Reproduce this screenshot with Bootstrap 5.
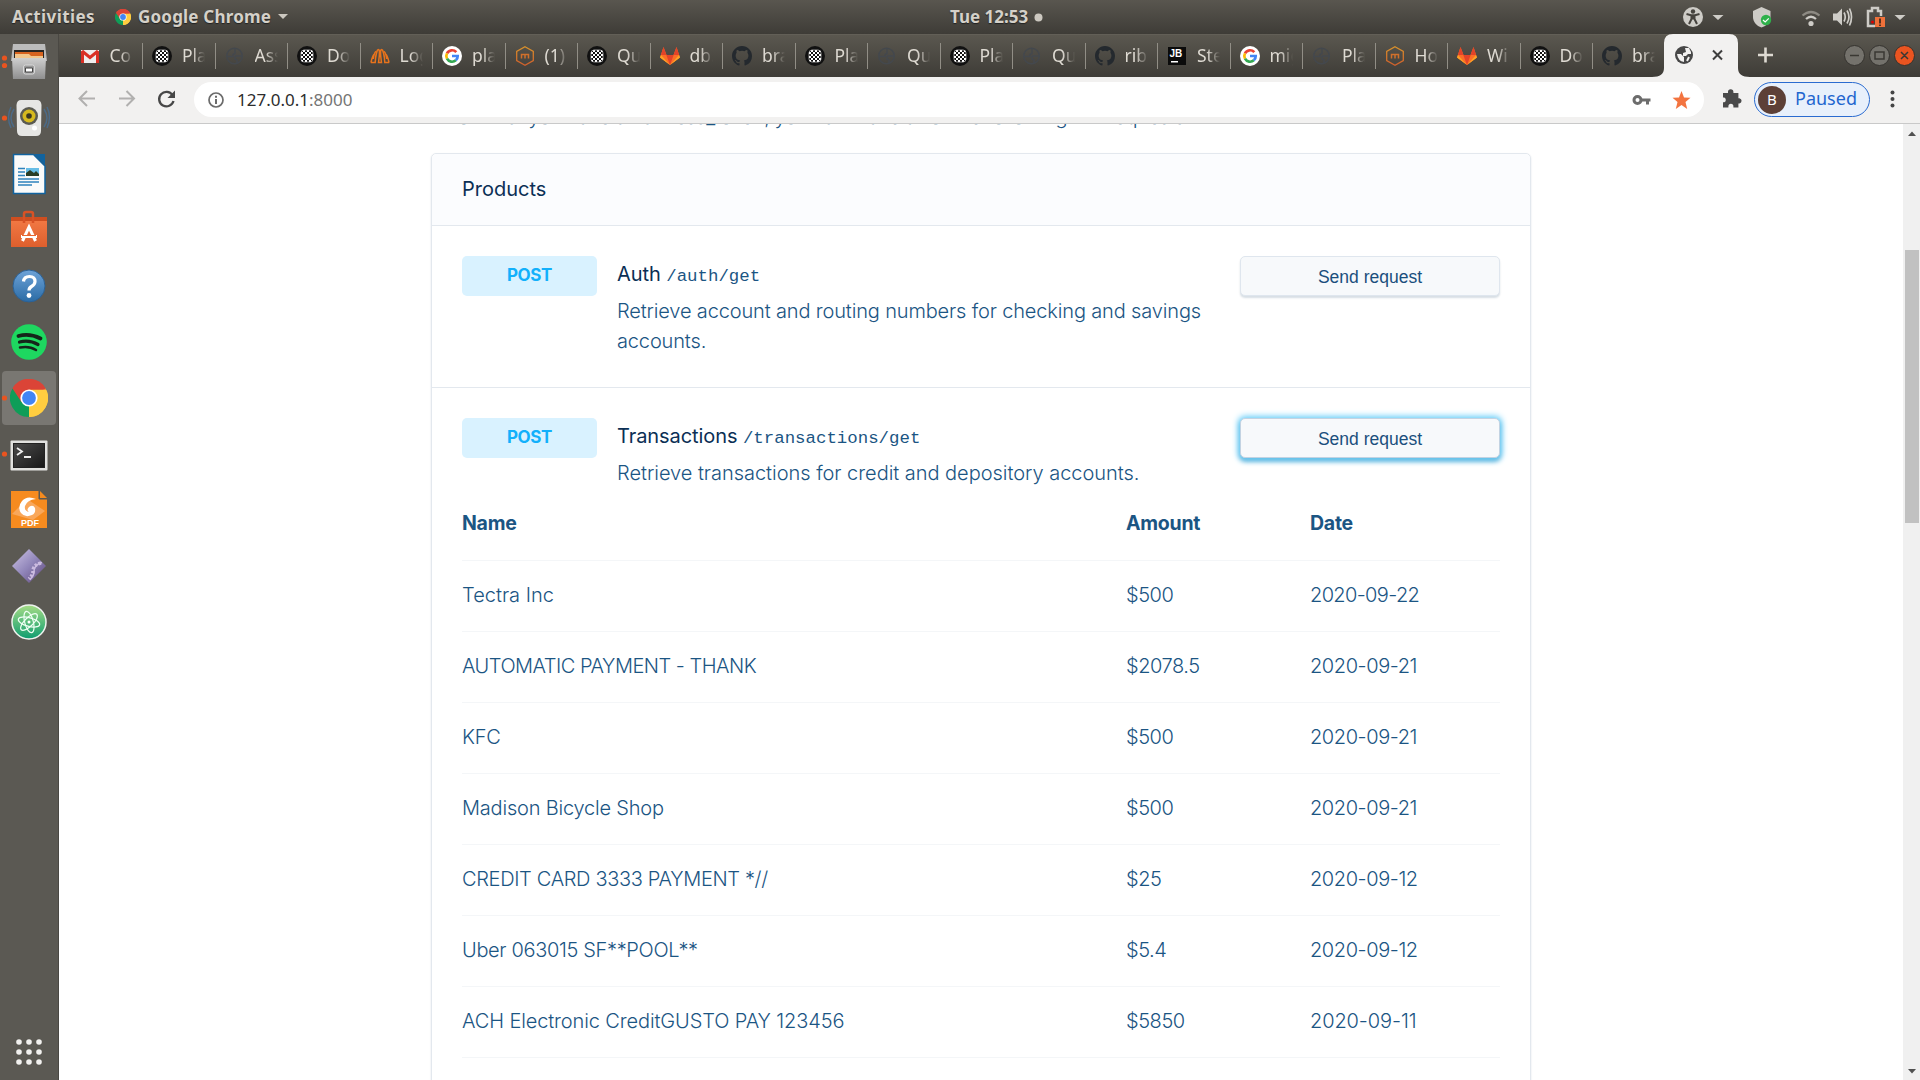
<!DOCTYPE html>
<html lang="en">
<head>
<meta charset="utf-8">
<title>Quickstart</title>
<link href="https://cdn.jsdelivr.net/npm/bootstrap@5.3.0/dist/css/bootstrap.min.css" rel="stylesheet">
<style>
html,body{width:1920px;height:1080px;overflow:hidden}
body{font-family:Inter,"Liberation Sans",sans-serif;background:#fff;color:#1b5583}
svg{display:block;flex:none}
.ui{font-family:"Noto Sans","Open Sans",sans-serif}
.panel{height:34px;background:linear-gradient(#59564f,#3e3c37);color:#d5d1c9;font-size:17px;font-weight:700;line-height:34px;text-shadow:0 1px 1px #222}
.panel-left{width:950px;padding-left:12px}
.panel-activities{width:103px;letter-spacing:.4px}
.panel-app{width:140px;margin-left:7px;letter-spacing:.2px}
.panel-clock{width:84px;letter-spacing:0}
.dock{width:59px;background:#5b5953;border-right:1px solid #4a4843}
.dock-item{width:58px;height:56px}
.strip{height:43px;background:linear-gradient(#5b5850,#3e3c37);box-shadow:inset 0 1px #625f57;padding-left:11.5px}
.tab-item{width:72.5px;height:43px;padding-left:9px}
.tab-item svg{width:20px;height:20px}
.tab-label{width:23px;margin-left:10px;margin-top:-2px;overflow:hidden;white-space:nowrap;color:#dedad2;font-size:17.5px;line-height:26px;-webkit-mask-image:linear-gradient(90deg,#000 45%,transparent);mask-image:linear-gradient(90deg,#000 45%,transparent)}
.tab-rule{width:1px;height:26px;margin-left:auto;background:#918e86}
.tab-active{margin-left:-14px}
.tools{height:47px;background:#f2f1f0;border-bottom:1px solid #c9c9c9;padding:0 0 1px 17px}
.omni{width:1510px;height:35px;border-radius:18px;background:#fff;font-size:17px;padding:0 4px 0 14px}
.omni-url{margin-left:13px;color:#2d2d2d}
.omni-port{color:#757575}
.pill{width:116px;height:35px;border:1px solid #2a6bd0;border-radius:18px;background:#e8f0fb;color:#1f66cf;font-size:18px;padding-left:3px}
.pill-text{margin:-2px 0 0 9px}
.avatar{width:28px;height:28px;border-radius:50%;background:#5d4037;color:#fff;font-size:15px}
.bar-track{width:17px;background:#f0f0f0;padding-top:126px}
.bar-thumb{width:14px;height:273px;background:#c1c1c1;margin-left:2px}
.page-col{width:1100px;margin-left:372px;font-size:20px;font-weight:300;line-height:30px}
.intro{display:flow-root;height:29px;padding-left:12px;white-space:nowrap;letter-spacing:-.37px}
.intro span{display:block;margin-top:-22px}
.panel-card{height:1000px;border:1px solid #e3e8ee;border-radius:5px;box-shadow:0 1px 2px rgba(3,49,86,.14)}
.card-title-bar{height:72px;background:#fbfcfe;border-bottom:1px solid #e3e8ee;border-radius:5px 5px 0 0;padding:20px 30px;color:#0b2f55;font-weight:400}
.endpoint{padding:30px 30px 0}
.endpoint-first{height:162px;border-bottom:1px solid #e3e8ee}
.endpoint-head{height:69px}
.verb{width:135px;height:40px;border-radius:5px;background:#d9f2ff;color:#12b0fb;font-weight:700;font-size:17px;letter-spacing:-.4px;line-height:38px}
.about{width:603px;margin-left:20px;letter-spacing:-.03px}
.about-tight{letter-spacing:-.15px}
.about-title{height:40px;line-height:36px;color:#0b2f55;font-weight:400;letter-spacing:-.08px}
.about-title code{font-family:"Liberation Mono",monospace;font-size:17.4px;color:#1b5583;font-weight:400;letter-spacing:0}
.send,.send:hover{width:260px;height:40px;border:1px solid #dfe6ee;border-radius:5px;background:#f7f9fb;color:#1b4f7d;font:17.5px/38px "Liberation Sans",sans-serif;padding:1px 0;box-shadow:0 2px 2px rgba(3,49,86,.16)}
.send.glow{border-color:#c3d3e2;box-shadow:0 0 6px 2px #6bd0fa,0 3px 5px #4a9bc4}
.tx{width:1038px;margin:0;--bs-table-bg:transparent;--bs-table-color:#1b5583;table-layout:fixed;letter-spacing:-.2px}
.tx th,.tx td{height:71px;padding:0 0 1px;border-bottom:1px solid #f4f6f8;vertical-align:middle}
.tx th{height:73px;font-weight:700;font-size:19.5px;letter-spacing:-.25px}
.tx td:nth-child(2){letter-spacing:-.45px}
.tx td:nth-child(3){letter-spacing:-.42px}
.tx tr:first-child td:nth-child(3){letter-spacing:-.64px}
.tx tr:last-child td:nth-child(3){letter-spacing:-.1px}
.tx .airy{letter-spacing:0}
.tx .caps{letter-spacing:-.5px}
.tx .caps-mix{letter-spacing:-.34px}
.tx .loose{letter-spacing:-.12px}
</style>
<script src="https://cdn.jsdelivr.net/npm/bootstrap@5.3.0/dist/js/bootstrap.bundle.min.js"></script>
</head>
<body>
<svg width="0" height="0" class="position-absolute">
<defs>
<linearGradient id="hexg" x2="0" y2="1"><stop stop-color="#d9922b"/><stop offset="1" stop-color="#cf5f2b"/></linearGradient>
<linearGradient id="metal" x2="0" y2="1"><stop stop-color="#cfcfcf"/><stop offset="1" stop-color="#8f8f8f"/></linearGradient>
<linearGradient id="bagg" x2="0" y2="1"><stop stop-color="#f47b46"/><stop offset="1" stop-color="#dd5f2d"/></linearGradient>
<linearGradient id="helpg" x2="0" y2="1"><stop stop-color="#6ea3d8"/><stop offset="1" stop-color="#2a6ba5"/></linearGradient>
<linearGradient id="termg" x2="1" y2="1"><stop stop-color="#4b4b4b"/><stop offset="1" stop-color="#171717"/></linearGradient>
<linearGradient id="purp" x2="1" y2="1"><stop stop-color="#cfc6e6"/><stop offset=".5" stop-color="#9186ba"/><stop offset="1" stop-color="#5c4478"/></linearGradient>
<linearGradient id="atomg" x2="0" y2="1"><stop stop-color="#a5dc86"/><stop offset="1" stop-color="#0f9d70"/></linearGradient>
<pattern id="chk" width="4" height="4" patternUnits="userSpaceOnUse"><rect width="4" height="4" fill="#fff"/><path d="M0 0h2v2H0zM2 2h2v2H2z" fill="#111"/></pattern>
<symbol id="plaid" viewBox="0 0 20 20"><circle cx="10" cy="10" r="10" fill="#111"/><rect x="4" y="4" width="12" height="12" rx="3" fill="url(#chk)" stroke="#eee" stroke-width=".6"/></symbol>
<symbol id="dim" viewBox="0 0 20 20"><g fill="none" stroke="#44484d" stroke-width="1.5"><circle cx="9.500" cy="10" r="7.800"/><path d="M10 2.500v5l-2 1v2H2M10 10h7M10 10v3l2 1v3"/></g></symbol>
<symbol id="gmail" viewBox="0 0 20 20"><path d="M1 4h18v13H1z" fill="#eee"/><path d="M1 17V5l3 1v11zM19 17V5l-3 1v11z" fill="#d93025"/><path d="M2 5l8 6.500L18 5" fill="none" stroke="#d93025" stroke-width="3"/></symbol>
<symbol id="logs" viewBox="0 0 20 20"><g fill="none" stroke="#e8731c" stroke-width="1.500"><path d="M.8 16.500h4.400C5.500 10 7 3.500 8.500 3.500S9.500 9 8.500 16.500h3C10.500 9 10 3.500 11.500 3.500S14.500 10 14.800 16.500h4.400"/><path d="M1 16.500C2 12 3 8.500 4 8.500M19 16.500C18 12 17 8.500 16 8.500M3.300 13C4 8 4.800 5.500 6.300 5.500M16.700 13C16 8 15.200 5.500 13.700 5.500"/></g></symbol>
<symbol id="goog" viewBox="0 0 20 20"><circle cx="10" cy="10" r="10" fill="#fff"/><g fill="none" stroke-width="2.700"><path d="M14.300 6.200A5.700 5.700 0 0 0 5 7.300" stroke="#ea4335"/><path d="M5 7.300a5.700 5.700 0 0 0 0 5.400" stroke="#fbbc05"/><path d="M5 12.700a5.700 5.700 0 0 0 8.800 1.600" stroke="#34a853"/><path d="M13.800 14.300A5.500 5.500 0 0 0 15.700 10H10" stroke="#4285f4"/></g></symbol>
<symbol id="hexm" viewBox="0 0 20 20"><path d="M10 .8l8.300 4.600v9.200L10 19.200l-8.300-4.600V5.400z" fill="none" stroke="url(#hexg)" stroke-width="1.300"/><path d="M6.500 12.500V8.500h7v4M10 8.500v4" fill="none" stroke="#d0702b" stroke-width="1.500"/></symbol>
<symbol id="lab" viewBox="0 0 20 20"><path d="M10 19L0 11.500 3.500 1l3 8h7l3-8L20 11.500z" fill="#fc6d26"/><path d="M10 19L6.300 9h7.400z" fill="#e24329"/><path d="M3.500 1l3 8H1zM16.500 1l-3 8H19z" fill="#e24329"/><path d="M10 19L0 11.500 1 9zM10 19l10-7.500L19 9z" fill="#fca326"/></symbol>
<symbol id="hub" viewBox="0 0 16 16"><path fill="#24292e" d="M8 0C3.580 0 0 3.580 0 8c0 3.540 2.290 6.530 5.470 7.590.4.070.55-.17.55-.38 0-.19-.01-.82-.01-1.490-2.010.37-2.530-.49-2.690-.94-.09-.23-.48-.94-.82-1.130-.28-.15-.68-.52-.01-.53.63-.01 1.080.58 1.230.82.72 1.210 1.870.87 2.330.66.07-.52.28-.87.51-1.070-1.780-.2-3.640-.89-3.640-3.950 0-.87.31-1.590.82-2.150-.08-.2-.36-1.020.08-2.120 0 0 .67-.21 2.200.82a7.600 7.600 0 0 1 4 0c1.530-1.040 2.200-.82 2.200-.82.44 1.100.16 1.920.08 2.120.51.56.82 1.270.82 2.150 0 3.070-1.870 3.750-3.650 3.950.29.25.54.73.54 1.480 0 1.070-.01 1.930-.01 2.200 0 .21.15.46.55.38A8 8 0 0 0 16 8c0-4.420-3.580-8-8-8z"/></symbol>
<symbol id="jb" viewBox="0 0 20 20"><path d="M1 1h18v18H1z" fill="#0b0b0b"/><text x="2.500" y="10.500" font-family="Liberation Sans" font-weight="700" font-size="10" fill="#fff">JB</text><path d="M4 15h7v1.500H4z" fill="#fff"/></symbol>
<symbol id="chrome" viewBox="0 0 38 38"><path d="M19 19L2.500 9.500A19 19 0 0 1 35.500 9.500z" fill="#db4437"/><path d="M19 19L35.500 9.500A19 19 0 0 1 19 38z" fill="#ffcd40"/><path d="M19 19L19 38A19 19 0 0 1 2.500 9.500z" fill="#0f9d58"/><path d="M19 10.500h16.900A19 19 0 0 1 19 38l7.400-14.800z" fill="#ffcd40"/><path d="M19 10.500h17A19 19 0 0 0 2.500 9.500L11.600 23.200z" fill="#db4437"/><circle cx="19" cy="19" r="8.600" fill="#fff"/><circle cx="19" cy="19" r="6.900" fill="#4285f4"/></symbol>
</defs>
</svg>

<div class="d-flex flex-column vh-100">
<header class="panel ui d-flex">
  <div class="panel-left d-flex align-items-center">
    <span class="panel-activities">Activities</span>
    <svg width="16" height="16"><use href="#chrome"/></svg>
    <span class="panel-app">Google Chrome</span>
    <svg width="10" height="6"><path d="M0 0h10L5 5z" fill="#ccc8c0"/></svg>
  </div>
  <div class="d-flex align-items-center flex-grow-1">
    <span class="panel-clock">Tue 12:53</span>
    <svg width="9" height="9"><circle cx="4.500" cy="4.500" r="4" fill="#ccc8c0"/></svg>
    <svg class="ms-auto" width="237" height="34" viewBox="1683 0 237 34">
      <g fill="#ceccc7"><circle cx="1693" cy="17" r="10"/><path d="M1712.500 15h11l-5.500 5zM1894.500 15h11l-5.500 5z"/>
      <path d="M1761.500 7l9 4v6c0 5-4 9-9 10.500-5-1.500-8.500-5.500-8.500-10.500v-6z"/>
      <circle cx="1811" cy="23.500" r="2.600"/><path d="M1833 13.500h4l5-5v17l-5-5h-4z"/></g>
      <path d="M1686.500 14l4.500 1.200h4l4.500-1.200M1691.500 15v4l-2.500 5M1694.500 15v4l2.500 5M1693 14.500v5" fill="none" stroke="#45423d" stroke-width="2"/><circle cx="1693" cy="11.500" r="2.200" fill="#45423d"/>
      <circle cx="1766" cy="20" r="5.200" fill="#2fb14b"/><path d="M1763 20l2.200 2 3.600-3.600" fill="none" stroke="#fff" stroke-width="1.200"/>
      <path d="M1806 19q5-4.500 10 0" fill="none" stroke="#ceccc7" stroke-width="2.200"/><path d="M1802.500 15.500q8.500-7 17 0" fill="none" stroke="#8d8a83" stroke-width="2.200"/><path d="M1844 12.500q2.500 4.500 0 9M1847 10.500q4 6.500 0 13M1849.500 8.500q4 8.500 0 17" fill="none" stroke="#ceccc7" stroke-width="1.700"/>
      <path d="M1881 16v-5h-3V8h-6v3h-4v15h7" fill="none" stroke="#ceccc7" stroke-width="2.500"/><path d="M1875 17h10v10h-10z" fill="#f0713a"/><path d="M1879 18.500h2v5h-2zM1879 24.500h2v1.500h-2z" fill="#55311f"/><circle cx="1872.500" cy="22" r="1.500" fill="#d00"/>
    </svg>
  </div>
</header>
<div class="d-flex flex-grow-1 overflow-hidden">
<nav class="dock d-flex flex-column flex-shrink-0">
  <svg class="dock-item" viewBox="0 0 58 56"><circle cx="4.500" cy="24" r="2.600" fill="#e95420"/><circle cx="4.500" cy="31.500" r="2.600" fill="#e95420"/><path d="M13 10h32l2 17H11z" fill="#bcbcbc"/><path d="M14 16h30v8H14z" fill="#292522"/><path d="M15 18h28v6H15z" fill="#d7631f"/><path d="M15 20h14l2 2h12v3H15z" fill="#f2c68c"/><path d="M12 24h34l-1 21H13z" fill="url(#metal)"/><rect x="23.500" y="31" width="11" height="9" rx="2" fill="#999" stroke="#d9d9d9"/><path d="M25.500 34h7v4h-7z" fill="#fff" stroke="#444"/></svg>
  <svg class="dock-item" viewBox="0 0 58 56"><circle cx="4.500" cy="28" r="2.600" fill="#e95420"/><path d="M14 19q-6 9 0 18M44 19q6 9 0 18M11 17q-5 10 0 21M47 17q5 10 0 21" fill="none" stroke="#4c6a86" stroke-width="1.500"/><path d="M21 10h16q4 0 4.500 5l-.5 26q0 5-5 5H22q-5 0-5-5l-.5-26q.5-5 4.500-5z" fill="#e6e6e4"/><circle cx="29" cy="26" r="9" fill="#5a5a52"/><circle cx="29" cy="26" r="6.500" fill="#d6b91e"/><circle cx="29" cy="26" r="2.800" fill="#3b3720"/><circle cx="34.500" cy="38" r="2.500" fill="#fff"/></svg>
  <svg class="dock-item" viewBox="0 0 58 56"><path d="M13.500 8.500h20L45 20v27.500H13.500z" fill="#fafafa" stroke="#11639f" stroke-width="1.500"/><path d="M34 8h11v11z" fill="#11639f"/><path d="M18 22.500h7M18 26h7M18 29.500h7M18 33h21M18 36h21M18 39h14" stroke="#2f83bd" stroke-width="1.600"/><path d="M26 22h13v8H26z" fill="#67bde6"/><path d="M26 30v-3l4-3 4 3 2-2 3 3v2z" fill="#2a3d25"/></svg>
  <svg class="dock-item" viewBox="0 0 58 56"><path d="M11 15h36v30H11z" fill="url(#bagg)"/><path d="M11 15h36v4H11z" fill="#ce4e20"/><path d="M24 21v-9q0-2 2-2h5q2 0 2 2v9" fill="none" stroke="#d85225" stroke-width="2.500"/><path d="M22.500 39l6.500-14 6.500 14M21 34.500h16" fill="none" stroke="#fff" stroke-width="3"/><path d="M22 33.500h14" stroke="#e9672f" stroke-width="1"/></svg>
  <svg class="dock-item" viewBox="0 0 58 56"><circle cx="29" cy="28" r="16" fill="url(#helpg)" stroke="#2b6196"/><path d="M23.500 23.500q.5-5 6-5 5.500 0 5.500 5 0 3-3.500 5-2.500 1.500-2.500 4" fill="none" stroke="#fff" stroke-width="3.200"/><circle cx="29" cy="37.500" r="2.400" fill="#fff"/></svg>
  <svg class="dock-item" viewBox="0 0 58 56"><circle cx="29" cy="28" r="17.800" fill="#1ed760"/><g fill="none" stroke="#15251a" stroke-linecap="round"><path d="M18.500 22q11-3 22 2.500" stroke-width="3.800"/><path d="M19.500 28q10-2.500 18.500 2.500" stroke-width="3.200"/><path d="M20 33.500q9-2 16 2.500" stroke-width="2.500"/></g></svg>
  <svg class="dock-item" viewBox="0 0 58 56"><rect x="2" y="1" width="54" height="54" rx="4" fill="#797772"/><circle cx="4.500" cy="28" r="2.600" fill="#e95420"/><use href="#chrome" x="10" y="9" width="38" height="38"/></svg>
  <svg class="dock-item" viewBox="0 0 58 56"><circle cx="4.500" cy="28" r="2.600" fill="#e95420"/><rect x="10.500" y="14.500" width="37" height="30" rx="1" fill="#e1e1df"/><rect x="13.500" y="17.500" width="31" height="24" fill="url(#termg)" stroke="#222"/><path d="M17 22l5 3.500-5 3.500M24 31h7" fill="none" stroke="#eee" stroke-width="1.800"/></svg>
  <svg class="dock-item" viewBox="0 0 58 56"><path d="M11 9h28l8 8v29H11z" fill="#f68b1f"/><path d="M39 9v8h8z" fill="#5b5953" stroke="#5b5953"/><path d="M40 9l7 7h-7z" fill="#f68b1f"/><path d="M12 32l15-15 18 12-12 9z" fill="#f9a75a"/><path d="M36 17q-9-4-14 2t-1 12q4 5 11 2 4-2 3-7-2-4-6-1-3 3 0 5-5-1-4-6 2-6 11-7z" fill="#fff"/><text x="21" y="43.500" font-family="Liberation Sans" font-weight="700" font-size="9" fill="#fff">PDF</text></svg>
  <svg class="dock-item" viewBox="0 0 58 56"><path d="M29 11l17 17-17 17-17-17z" fill="url(#purp)"/><path d="M41 25q-8 2-8 8 0 4-4 8" fill="none" stroke="#cbbbe0" stroke-width="3.500" stroke-dasharray="2.500 1.500"/><path d="M42 24.500q-8 2-8 9 0 4-4 8" fill="none" stroke="#cbbbe0" stroke-width="1.500"/></svg>
  <svg class="dock-item" viewBox="0 0 58 56"><circle cx="29" cy="28" r="17" fill="url(#atomg)" stroke="#eef3ee" stroke-width="1.500"/><g fill="none" stroke="#effff4" stroke-width="1.200"><ellipse cx="29" cy="28" rx="11" ry="4.300" transform="rotate(15 29 28)"/><ellipse cx="29" cy="28" rx="11" ry="4.300" transform="rotate(75 29 28)"/><ellipse cx="29" cy="28" rx="11" ry="4.300" transform="rotate(135 29 28)"/></g><circle cx="29" cy="28" r="1.500" fill="#fff"/></svg>
  <svg class="mt-auto mb-2" width="58" height="40" viewBox="0 1032 58 40"><g fill="#f2f1ef"><circle cx="19" cy="1042" r="2.800"/><circle cx="29" cy="1042" r="2.800"/><circle cx="39" cy="1042" r="2.800"/><circle cx="19" cy="1052" r="2.800"/><circle cx="29" cy="1052" r="2.800"/><circle cx="39" cy="1052" r="2.800"/><circle cx="19" cy="1062" r="2.800"/><circle cx="29" cy="1062" r="2.800"/><circle cx="39" cy="1062" r="2.800"/></g></svg>
</nav>
<main class="d-flex flex-column flex-grow-1 overflow-hidden">
  <div class="strip ui d-flex flex-shrink-0">
    <svg id="active-tab" class="tab-active" width="98" height="43" viewBox="1652 34 98 43"><path d="M1652 77q12 0 12-9V43q0-9 9-9h56q9 0 9 9v25q0 9 12 9z" fill="#f2f1f0"/><circle cx="1684" cy="55" r="9" fill="#474747"/><path d="M1677 54h4l3 3v5q-6-1-7-8zM1685 48h4l2 4v2h-3l-2 2h-3v-3l3-1z" fill="#f2f1f0"/><path d="M1689 57l-2 4" stroke="#f2f1f0" stroke-width="2"/><path d="M1713 50.500l9 9M1722 50.500l-9 9" stroke="#3e3e3e" stroke-width="2"/></svg>
    <svg width="170" height="43" viewBox="1750 34 170 43"><path d="M1758 55h15M1765.500 47.500v15" stroke="#dedad2" stroke-width="2.600"/><g stroke="#35332f"><circle cx="1854.500" cy="55.500" r="10" fill="#74726c"/><circle cx="1879.500" cy="55.500" r="10" fill="#74726c"/><circle cx="1904.500" cy="55.500" r="10" fill="#ea5420"/></g><path d="M1850 55.500h9M1875 52h9v7h-9zM1901 52l7 7M1908 52l-7 7" fill="none" stroke="#3a3833" stroke-width="1.500"/></svg>
  </div>
  <div class="tools ui d-flex align-items-center flex-shrink-0">
    <svg width="118" height="46" viewBox="76 77 118 46"><g fill="none" stroke-width="2"><path d="M95 98.500H80M87 91l-7.500 7.500L87 106M119 98.500h15M126.500 91l7.500 7.500-7.500 7.500" stroke="#b1b0af"/><path d="M172.500 95A7.300 7.300 0 1 0 173.500 101" stroke="#474747" stroke-width="2.300"/></g><path d="M175 90.500v7.500h-7.500z" fill="#474747"/></svg>
    <div class="omni d-flex align-items-center">
      <svg width="16" height="16"><circle cx="8" cy="8" r="7" fill="none" stroke="#6b6b6b" stroke-width="1.700"/><path d="M7 7h2v5H7zM7 3.800h2v2H7z" fill="#6b6b6b"/></svg>
      <span class="omni-url">127.0.0.1<span class="omni-port">:8000</span></span>
      <svg class="ms-auto" width="72" height="24" viewBox="1628 87 72 24"><circle cx="1637.500" cy="99" r="3.500" fill="none" stroke="#6c6c6c" stroke-width="3"/><path d="M1642 97.500h8.500v3h-1.500v3h-3v-3h-4z" fill="#6c6c6c"/><path d="M1681.500 90l2.500 6.500 6.500.3-5 4.200 1.700 7-5.700-4-5.700 4 1.700-7-5-4.200 6.500-.3z" fill="#f37440"/></svg>
    </div>
    <svg width="50" height="46" viewBox="1704 77 50 46"><path d="M1723 93h5v-1a2.700 2.700 0 0 1 5.400 0v1h5v5.200h1a2.700 2.700 0 0 1 0 5.300h-1v4h-5v-1.300a2.500 2.500 0 0 0-5 0v1.300H1723v-5.300h1.300a2.500 2.500 0 0 0 0-4.600H1723z" fill="#4a4a4a"/></svg>
    <div class="pill d-flex align-items-center"><span class="avatar d-flex align-items-center justify-content-center">B</span><span class="pill-text">Paused</span></div>
    <svg width="48" height="46" viewBox="1870 77 48 46"><g fill="#444"><circle cx="1892.500" cy="92.500" r="2"/><circle cx="1892.500" cy="99" r="2"/><circle cx="1892.500" cy="105.500" r="2"/></g></svg>
  </div>
  <div class="d-flex flex-grow-1 overflow-hidden">
    <div class="flex-grow-1">
      <div class="page-col">
        <div class="intro"><span>Now that you have an access_token, you can make all of the following API requests:</span></div>
        <section class="panel-card">
          <div class="card-title-bar">Products</div>
          <div class="endpoint endpoint-first d-flex">
            <div class="verb text-center">POST</div>
            <div class="about about-tight"><div class="about-title">Auth <code>/auth/get</code></div>Retrieve account and routing numbers for checking and savings<br>accounts.</div>
            <button class="btn send ms-auto">Send request</button>
          </div>
          <div class="endpoint">
            <div class="endpoint-head d-flex">
              <div class="verb text-center">POST</div>
              <div class="about"><div class="about-title">Transactions <code>/transactions/get</code></div>Retrieve transactions for credit and depository accounts.</div>
              <button class="btn send glow ms-auto">Send request</button>
            </div>
            <table class="table tx">
              <colgroup><col style="width:664px"><col style="width:184px"><col></colgroup>
              <thead><tr><th>Name</th><th>Amount</th><th>Date</th></tr></thead>
              <tbody>
              <tr><td class="airy">Tectra Inc</td><td>$500</td><td>2020-09-22</td></tr>
              <tr><td class="caps">AUTOMATIC PAYMENT - THANK</td><td>$2078.5</td><td>2020-09-21</td></tr>
              <tr><td>KFC</td><td>$500</td><td>2020-09-21</td></tr>
              <tr><td>Madison Bicycle Shop</td><td>$500</td><td>2020-09-21</td></tr>
              <tr><td class="caps-mix">CREDIT CARD 3333 PAYMENT *//</td><td>$25</td><td>2020-09-12</td></tr>
              <tr><td class="caps-mix">Uber 063015 SF**POOL**</td><td>$5.4</td><td>2020-09-12</td></tr>
              <tr><td class="loose">ACH Electronic CreditGUSTO PAY 123456</td><td>$5850</td><td>2020-09-11</td></tr>
              </tbody>
            </table>
          </div>
        </section>
      </div>
    </div>
    <div class="bar-track position-relative"><svg class="position-absolute top-0 start-0" width="17" height="17"><path d="M5 12h8L9 7.500z" fill="#505050"/></svg><div class="bar-thumb"></div><svg class="position-absolute bottom-0 start-0" width="17" height="17"><path d="M5 6h8l-4 4.500z" fill="#505050"/></svg></div>
  </div>
</main>
</div>
</div>
<script>
const tabs = [["gmail","Co"],["plaid","Pla"],["dim","Ass"],["plaid","Do"],["logs","Log"],["goog","pla"],["hexm","(1)"],["plaid","Qu"],["lab","db."],["hub","bra"],["plaid","Pla"],["dim","Qu"],["plaid","Pla"],["dim","Qu"],["hub","rib"],["jb","Ste"],["goog","mig"],["dim","Pla"],["hexm","Ho"],["lab","Wi"],["plaid","Do"],["hub","bra"]];
document.getElementById("active-tab").insertAdjacentHTML("beforebegin", tabs.map(([icon,label],i) =>
  `<div class="tab-item d-flex align-items-center flex-shrink-0"><svg><use href="#${icon}"/></svg><span class="tab-label">${label}</span>${i<21?'<i class="tab-rule"></i>':''}</div>`).join(""));
</script>
</body>
</html>
